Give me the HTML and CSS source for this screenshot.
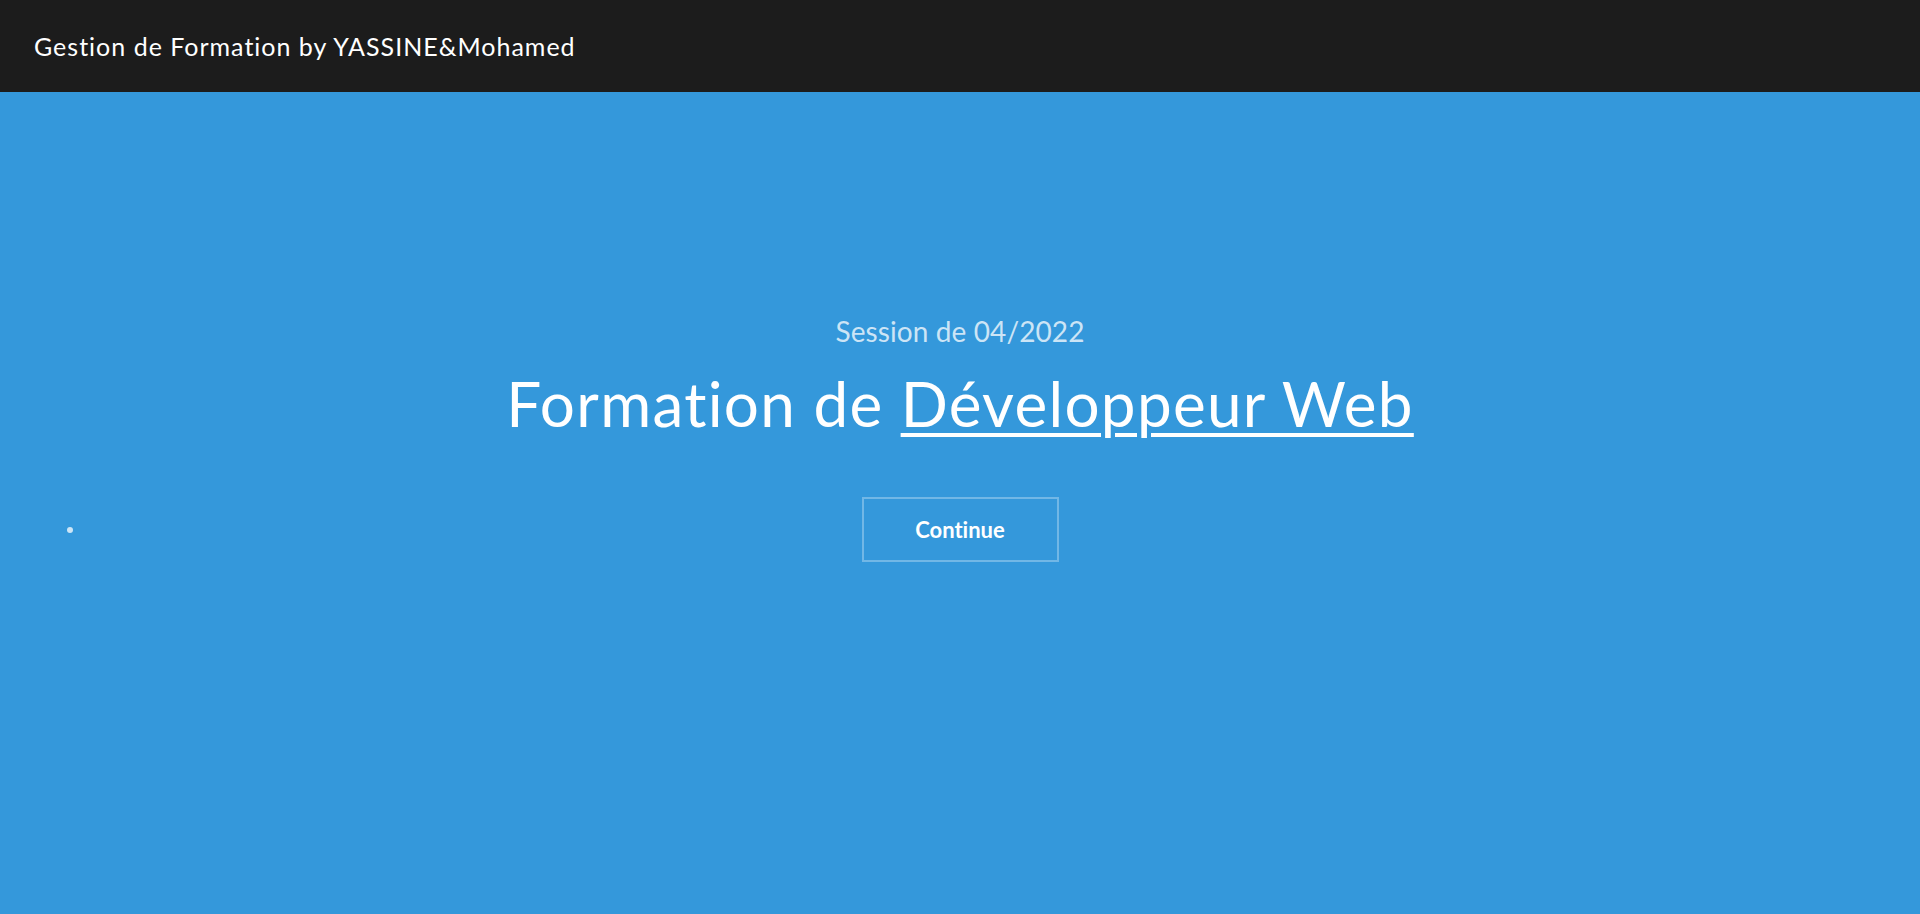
FILE: index.html
```html
<!DOCTYPE html>
<html lang="fr">
<head>
<meta charset="utf-8">
<title>Gestion de Formation</title>
<link rel="stylesheet" href="styles.css">
</head>
<body>
<header class="topbar">
  <span class="brand">Gestion de Formation by YASSINE&amp;Mohamed</span>
</header>
<main class="hero">
  <p class="session">Session de 04/2022</p>
  <h1 class="title">Formation de <a href="#" class="title-link">Développeur Web</a></h1>
  <div class="action-row">
    <div class="side"><span class="dot"></span></div>
    <a href="#" class="btn">Continue</a>
    <div class="side"></div>
  </div>
</main>
</body>
</html>
```
FILE: styles.css
```css
* { box-sizing: border-box; }
html, body { margin: 0; height: 100%; }
body {
  font-family: Lato, "Noto Sans", sans-serif;
  font-variant-ligatures: none;
  background: #3498db;
  display: flex;
  flex-direction: column;
  min-height: 100vh;
}
.topbar {
  height: 92px;
  background: #1c1c1c;
  display: flex;
  align-items: center;
  padding-left: 34px;
  flex-shrink: 0;
}
.brand {
  color: #fff;
  font-size: 25px;
  letter-spacing: 1px;
}
.hero {
  flex: 1;
  background: #3498db;
  display: flex;
  flex-direction: column;
  align-items: center;
  padding-top: 225px;
}
.session {
  margin: 0;
  color: rgba(255,255,255,0.75);
  font-size: 28px;
  letter-spacing: 0.1px;
  line-height: 1;
}
.title {
  margin: 21px 0 0;
  color: #fff;
  font-size: 62px;
  font-weight: 400;
  letter-spacing: 1.3px;
  line-height: 1.2;
}
.title-link {
  color: #fff;
  text-decoration: underline;
  text-decoration-thickness: 4px;
  text-underline-offset: 6px;
}
.action-row {
  width: 100%;
  display: grid;
  grid-template-columns: 1fr auto 1fr;
  align-items: center;
  margin-top: 57px;
}
.side { display: flex; align-items: center; }
.dot {
  width: 6px;
  height: 6px;
  border-radius: 50%;
  background: rgba(255,255,255,0.75);
  margin-left: 67px;
  margin-top: 1px;
}
.btn {
  width: 197px;
  height: 65px;
  border: 2px solid rgba(255,255,255,0.3);
  color: #fff;
  font-weight: 700;
  font-size: 22px;
  text-decoration: none;
  display: flex;
  align-items: center;
  justify-content: center;
}
```
